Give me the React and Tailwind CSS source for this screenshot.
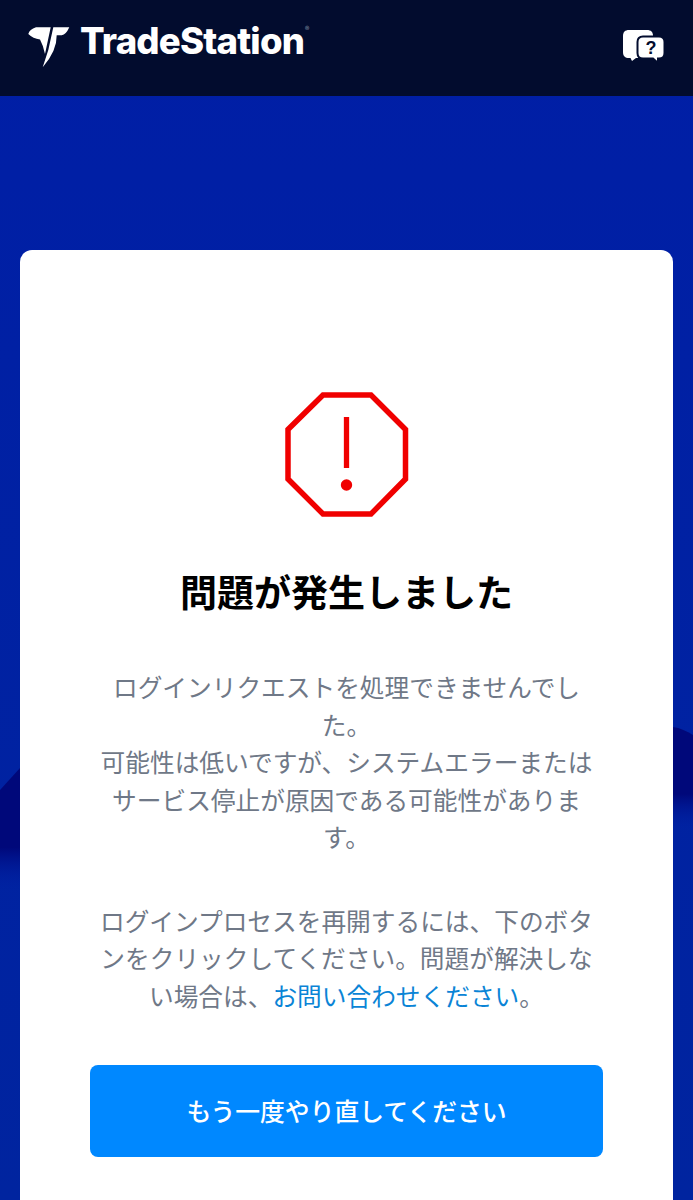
const cjk = 'font-["Noto_Sans_CJK_JP","Noto_Sans",sans-serif]';

function Logo() {
  return (
    <div className="flex items-start">
      <svg width="42" height="42" viewBox="0 0 42 42" className="block">
        <path d="M0.3 7 Q1.5 2.5 8 0.3 H22.7 L17 27 Q15.5 19 12 12.5 Q5 11.5 0.3 7Z" fill="#fff" />
        <path d="M25.3 0.3 H41.3 Q38 7.7 33.7 8.3 L28.7 8.3 Q29 24 14.7 40.3 L20.3 23Z" fill="#fff" />
      </svg>
      <span className="-mt-[7px] ml-[10px] font-['Inter',sans-serif] text-[36.5px] leading-[42px] font-extrabold tracking-[-0.8px] text-white">
        TradeStation
      </span>
      <span className="-mt-[2px] ml-[1px] text-[9px] leading-none text-[#8a93a8]">®</span>
    </div>
  );
}

function HelpIcon() {
  return (
    <svg width="42" height="36" viewBox="0 0 42 36" className="block">
      <path d="M6 0 H24 C28 0 30 2 30 6 V22 C30 26 28 28 24 28 H13 L9 31 L7.5 28 H6 C2 28 0 26 0 22 V6 C0 2 2 0 6 0Z" fill="#fff" />
      <path d="M20 6.5 H36 C39.5 6.5 41.5 8.5 41.5 12 V23 C41.5 26.5 39.5 28.5 36 28.5 H35 V33 L30 28.5 H20 C16.5 28.5 14.5 26.5 14.5 23 V12 C14.5 8.5 16.5 6.5 20 6.5Z" fill="#fff" stroke="#020c2e" strokeWidth="2" />
      <text x="28" y="24" textAnchor="middle" fontSize="18" fontWeight="700" fill="#020c2e" fontFamily="Liberation Sans, sans-serif">?</text>
    </svg>
  );
}

function AlertIcon() {
  return (
    <svg width="124" height="125" viewBox="0 0 124 125" className="block">
      <path d="M38 3 H86 L120.5 37.5 V87 L86 122 H38 L3 87 V37.5Z" fill="none" stroke="#f00000" strokeWidth="5.5" />
      <path d="M61.5 25 V76" stroke="#f00000" strokeWidth="5.3" />
      <circle cx="61.5" cy="93" r="5.7" fill="#f00000" />
    </svg>
  );
}

export default function App() {
  return (
    <div className={`relative h-[1200px] overflow-hidden bg-gradient-to-b from-[#001ea6] to-[#00249f] ${cjk}`}>
      {/* dark band running behind the card */}
      <svg className="absolute inset-0" width="693" height="1200" viewBox="0 0 693 1200">
        <defs>
          <linearGradient id="bandLeft" x1="0" y1="0" x2="0" y2="1">
            <stop offset="0" stopColor="#00087a" />
            <stop offset="0.65" stopColor="#00087a" />
            <stop offset="1" stopColor="#001ea3" stopOpacity="0" />
          </linearGradient>
          <linearGradient id="bandRight" x1="0" y1="0" x2="0" y2="1">
            <stop offset="0" stopColor="#00087a" />
            <stop offset="0.65" stopColor="#00087a" />
            <stop offset="1" stopColor="#001ea3" stopOpacity="0" />
          </linearGradient>
        </defs>
        <path d="M0 790 L20 768 V890 H0Z" fill="url(#bandLeft)" />
        <path d="M673 727 C680 728 687 731 693 735 V830 H673Z" fill="url(#bandRight)" />
      </svg>

      <header className="relative flex h-[96px] items-center justify-between bg-[#020c2e] pr-[28px] pl-[28px]">
        <Logo />
        <HelpIcon />
      </header>

      <main className="relative mx-[20px] mt-[154px] flex h-[1000px] flex-col items-center rounded-t-[12px] bg-white px-[70px] pt-[142px]">
        <AlertIcon />
        <h1 className="mt-[50px] text-[37px] leading-[48px] font-bold text-black">問題が発生しました</h1>
        <p className="mt-[53px] w-[500px] text-center text-[24.7px] leading-[37.5px] text-[#6f7887]">
          ログインリクエストを処理できませんでした。
          <br />
          可能性は低いですが、システムエラーまたはサービス停止が原因である可能性があります。
        </p>
        <p className="mt-[46px] w-[500px] text-center text-[24.7px] leading-[37.5px] text-[#6f7887]">
          ログインプロセスを再開するには、下のボタンをクリックしてください。問題が解決しない場合は、
          <a className="text-[#0a84d6]">お問い合わせください</a>。
        </p>
        <button className="mt-[51px] h-[92px] w-full rounded-[8px] bg-[#0088ff] text-[24.8px] font-medium text-white">
          もう一度やり直してください
        </button>
      </main>
    </div>
  );
}
